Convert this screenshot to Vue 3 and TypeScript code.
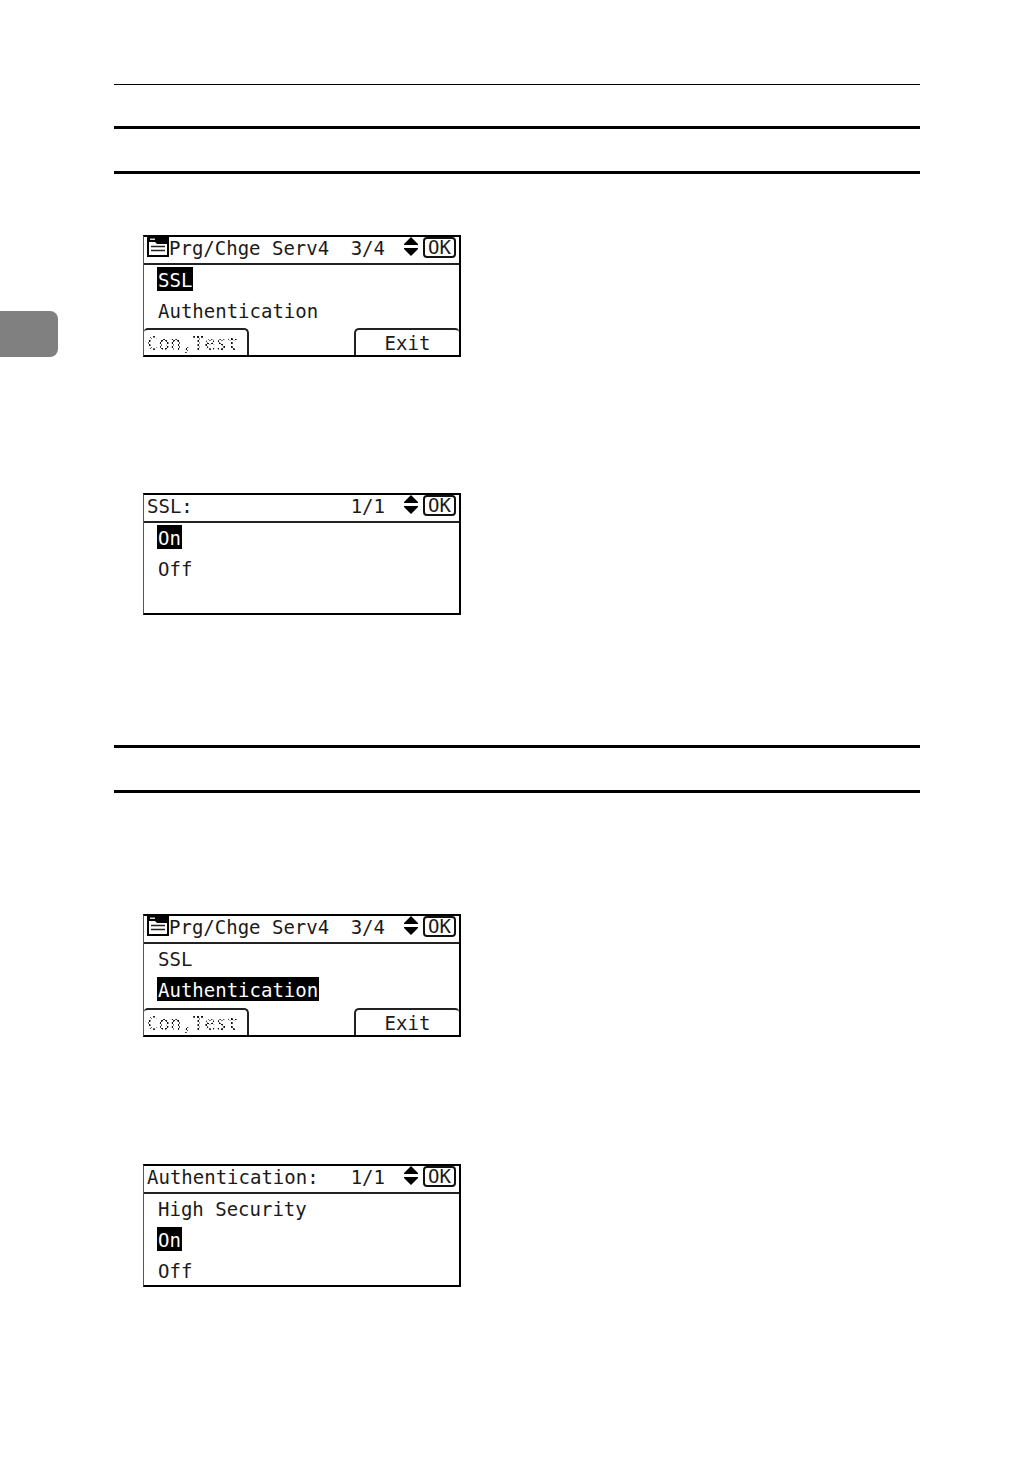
<script setup lang="ts">
interface Screen {
  title: string
  icon: boolean
  page: string
  items: string[]
  selected: number
  softKeys: boolean
}

interface Section {
  name: string
  screens: Screen[]
}

const sections: Section[] = [
  {
    name: 'ssl',
    screens: [
      { title: 'Prg/Chge Serv4', icon: true, page: '3/4', items: ['SSL', 'Authentication'], selected: 0, softKeys: true },
      { title: 'SSL:', icon: false, page: '1/1', items: ['On', 'Off'], selected: 0, softKeys: false },
    ],
  },
  {
    name: 'authentication',
    screens: [
      { title: 'Prg/Chge Serv4', icon: true, page: '3/4', items: ['SSL', 'Authentication'], selected: 1, softKeys: true },
      { title: 'Authentication:', icon: false, page: '1/1', items: ['High Security', 'On', 'Off'], selected: 1, softKeys: false },
    ],
  },
]
</script>

<template>
  <div class="page">
    <aside class="margin"><div class="thumb"></div></aside>
    <main class="content">
      <div class="top-rule"></div>
      <section v-for="section in sections" :key="section.name" class="section" :class="section.name">
        <div class="heading"></div>
        <div class="screens">
          <div v-for="(screen, n) in section.screens" :key="n" class="lcd">
            <header class="bar">
              <svg v-if="screen.icon" class="menu-icon" width="22" height="20" viewBox="0 0 22 20">
                <path d="M0 0H22V20H0Z" fill="#000" />
                <path d="M3 1.5H8V3H3Z" fill="#ddd" />
                <path d="M2 5H8L10 7H20V18H2Z" fill="#fff" />
                <path d="M4 9.5H18M4 13.5H18" stroke="#222" stroke-width="1.5" />
              </svg>
              <span class="title">{{ screen.title }}</span>
              <span class="count">{{ screen.page }}</span>
              <svg class="arrows" width="14" height="19" viewBox="0 0 14 19">
                <path d="M7 0L14 7V8H0V7Z M0 11H14V12L7 19L0 12Z" fill="#000" />
              </svg>
              <button type="button" class="ok">OK</button>
            </header>
            <div class="items">
              <button
                v-for="(item, i) in screen.items"
                :key="item"
                type="button"
                class="item"
                :class="{ selected: i === screen.selected }"
              >{{ item }}</button>
            </div>
            <footer v-if="screen.softKeys" class="soft-keys">
              <button type="button" class="key left" disabled><span class="dotted">Con,Test</span></button>
              <button type="button" class="key right">Exit</button>
            </footer>
          </div>
        </div>
      </section>
    </main>
  </div>
</template>

<style>
body {
  margin: 0;
  background: #fff;
}
</style>

<style scoped>
.page {
  display: grid;
  grid-template-columns: 114px minmax(0, 1fr) 112px;
  color: #1a1a1a;
  font-family: "DejaVu Sans Mono", "Liberation Mono", monospace;
  font-size: 19px;
  line-height: 22px;
}

.page * {
  box-sizing: border-box;
}

.thumb {
  width: 58px;
  height: 46px;
  margin-top: 311px;
  border-radius: 0 8px 8px 0;
  background: #808080;
}

.content {
  padding-top: 84px;
}

.top-rule {
  height: 1px;
  margin-bottom: 41px;
  background: #000;
}

.heading {
  height: 48px;
  border-top: 3px solid #000;
  border-bottom: 3px solid #000;
}

.screens {
  display: flex;
  flex-direction: column;
  align-items: flex-start;
  padding-left: 29px;
}

.ssl .screens {
  gap: 136px;
  padding-top: 61px;
  padding-bottom: 130px;
}

.authentication .screens {
  gap: 127px;
  padding-top: 121px;
}

.lcd {
  display: flex;
  flex-direction: column;
  width: 318px;
  height: 122px;
  border: 2px solid #000;
  border-left: 1px solid #555;
}

.authentication .lcd {
  height: 123px;
}

.bar {
  display: flex;
  align-items: flex-start;
  height: 28px;
  padding: 0 3px;
  border-bottom: 2px solid #222;
}

.menu-icon {
  flex: none;
}

.title {
  flex: 1;
  white-space: pre;
}

.count {
  margin-right: 19px;
}

.arrows {
  flex: none;
  margin-right: 5px;
}

button {
  display: block;
  margin: 0;
  padding: 0;
  border: 0;
  background: none;
  color: inherit;
  font: inherit;
}

.ok {
  width: 33px;
  height: 21px;
  border: 2px solid #111;
  border-radius: 4px;
  line-height: 17px;
}

.items {
  display: flex;
  flex: 1;
  flex-direction: column;
  align-items: flex-start;
  gap: 7px;
  min-height: 0;
  padding: 2px 0 0 13px;
}

.item {
  height: 24px;
  padding: 2px 1px 0;
  white-space: pre;
}

.selected {
  background: #000;
  color: #fff;
}

.soft-keys {
  display: flex;
  justify-content: space-between;
}

.key {
  width: 105px;
  height: 27px;
  border-top: 2px solid #222;
}

.left {
  padding-left: 3px;
  border-right: 2px solid #222;
  border-radius: 4px 5px 0 0;
  text-align: left;
}

.right {
  border-left: 2px solid #222;
  border-radius: 5px 4px 0 0;
}

.dotted {
  color: #111;
  -webkit-mask-image: conic-gradient(#000 25%, transparent 0 50%, #000 0 75%, transparent 0);
  mask-image: conic-gradient(#000 25%, transparent 0 50%, #000 0 75%, transparent 0);
  -webkit-mask-size: 4px 4px;
  mask-size: 4px 4px;
}
</style>
